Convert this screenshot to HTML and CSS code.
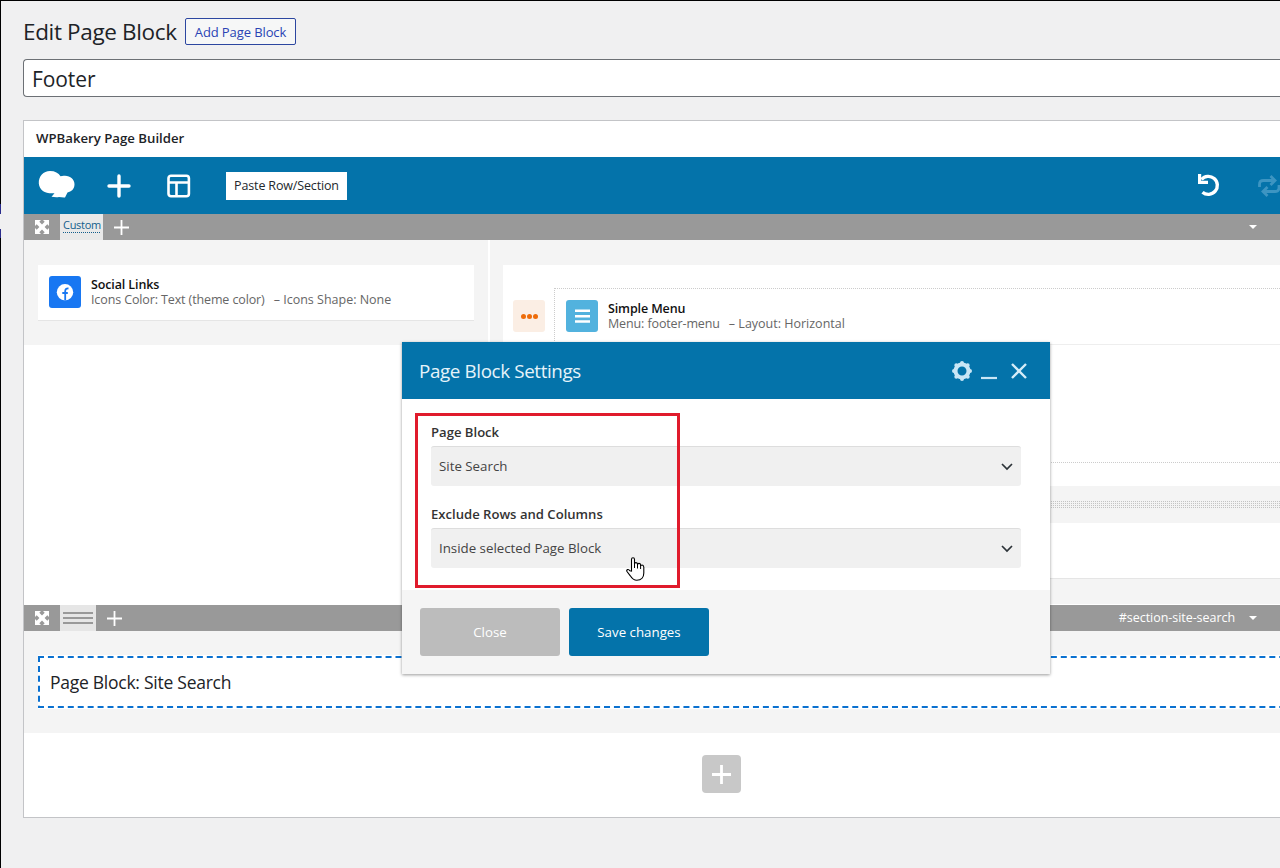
FILE: index.html
```html
<!DOCTYPE html>
<html lang="en">
<head>
    <meta charset="UTF-8">
    <meta name="viewport" content="width=device-width, initial-scale=1.0">
    <title>Edit Page Block</title>
    <link rel="stylesheet" href="styles.css">
</head>
<body>
    <div class="admin-edge"></div>
    <div class="page">
        <div class="page-head">
            <h1>Edit Page Block</h1>
            <a class="page-action">Add Page Block</a>
        </div>
        <div class="title-input">Footer</div>

        <!-- Builder -->
        <div class="postbox">
            <h2 class="postbox-title">WPBakery Page Builder</h2>

            <div class="toolbar">
                <svg class="logo" width="38" height="28" viewBox="0 0 38 28">
                    <path fill="#fff" d="M12 0C17 0 20.500 2 22.500 5.300c1.500-.6 3-.8 4.500-.5 5.500.2 9.500 3.700 9.500 8.500 0 4.800-3.200 7.600-7 8.200l-2.500 5c-2 .2-4-.2-6-.5-2 .4-5 .2-7.500-.3l3-3.500C8 23 1.500 20 .8 12.500 .5 5 5.500 0 12 0z"/>
                </svg>
                <svg class="tool-add" width="24" height="24" viewBox="0 0 24 24">
                    <path d="M12 2v20M2 12h20" stroke="#fff" stroke-width="3.400" stroke-linecap="round"/>
                </svg>
                <svg class="tool-template" width="24" height="24" viewBox="0 0 24 24" fill="none" stroke="#fff" stroke-width="2.600">
                    <rect x="1.500" y="1.800" width="20.400" height="20.400" rx="2.500"/>
                    <path d="M2 8.500h20M9.500 8.500V22"/>
                </svg>
                <button class="paste-btn">Paste Row/Section</button>
                <svg class="tool-undo" width="24" height="24" viewBox="0 0 24 24">
                    <path d="M4.500 5.500A9 9 0 1 1 5.500 18.200" fill="none" stroke="#fff" stroke-width="3.400"/>
                    <path d="M1 0h3.200v6.800h6.800V10H1z" fill="#fff"/>
                </svg>
                <svg class="tool-redo" width="24" height="22" viewBox="0 0 24 22" fill="none" stroke="#3d95c2" stroke-width="2.800">
                    <path d="M2.500 12V9.500Q2.500 5.500 6.500 5.500h11M22 10v2.500q0 4-4 4H7"/>
                    <path d="M13.500 1l4.500 4.500-4.500 4.500M10.500 12L6 16.500l4.500 4.500"/>
                </svg>
            </div>

            <div class="row-controls">
                <span class="ctl-move">
                    <svg width="14" height="14" viewBox="0 0 14 14" fill="#fff">
                        <path d="M0 0h6L4.300 1.700 7 4.400l2.700-2.700L8 0h6v6l-1.700-1.700L9.600 7l2.700 2.700L14 8v6H8l1.700-1.700L7 9.600l-2.700 2.700L6 14H0V8l1.700 1.700L4.400 7 1.700 4.300 0 6z"/>
                    </svg>
                </span>
                <span class="ctl-custom"><span>Custom</span></span>
                <svg class="ctl-add" width="15" height="15" viewBox="0 0 15 15"><path d="M7.500 0v15M0 7.500h15" stroke="#fff" stroke-width="1.800"/></svg>
                <span class="caret"></span>
            </div>

            <div class="row">
                <div class="column-left">
                    <div class="element">
                        <svg class="element-icon" width="32" height="32" viewBox="0 0 32 32">
                            <rect width="32" height="32" rx="3" fill="#1877f2"/>
                            <circle cx="16" cy="16.200" r="8.200" fill="#fff"/>
                            <path d="M16.200 24.500v-9.300q0-3 3.300-2.700M13.300 17h5.500" stroke="#1877f2" stroke-width="1.800" fill="none"/>
                        </svg>
                        <div class="element-text">
                            <strong>Social Links</strong>
                            <p><span>Icons Color: Text (theme color)</span><span class="param">– Icons Shape: None</span></p>
                        </div>
                    </div>
                </div>
                <div class="column-right">
                    <div class="wrapper">
                        <div class="wrapper-handle"><i></i><i></i><i></i></div>
                        <div class="inner">
                            <div class="element element-menu">
                                <svg class="element-icon" width="32" height="32" viewBox="0 0 32 32">
                                    <rect width="32" height="32" rx="3" fill="#52b2de"/>
                                    <path d="M9 10.800h15M9 16.300h15M9 21.500h15" stroke="#fff" stroke-width="2.600"/>
                                </svg>
                                <div class="element-text">
                                    <strong>Simple Menu</strong>
                                    <p><span>Menu: footer-menu</span><span class="param">– Layout: Horizontal</span></p>
                                </div>
                            </div>
                        </div>
                    </div>
                    <div class="separator"></div>
                    <div class="blank-element"></div>
                </div>
            </div>

            <div class="row-controls">
                <span class="ctl-move">
                    <svg width="14" height="14" viewBox="0 0 14 14" fill="#fff">
                        <path d="M0 0h6L4.300 1.700 7 4.400l2.700-2.700L8 0h6v6l-1.700-1.700L9.600 7l2.700 2.700L14 8v6H8l1.700-1.700L7 9.600l-2.700 2.700L6 14H0V8l1.700 1.700L4.400 7 1.700 4.300 0 6z"/>
                    </svg>
                </span>
                <span class="ctl-layout"><i></i><i></i><i></i></span>
                <svg class="ctl-add" width="15" height="15" viewBox="0 0 15 15"><path d="M7.500 0v15M0 7.500h15" stroke="#fff" stroke-width="1.800"/></svg>
                <span class="row-id">#section-site-search</span>
                <span class="caret"></span>
            </div>

            <div class="row-second">
                <div class="page-block">
                    <svg class="dashes" width="100%" height="54">
                        <path d="M1 1v52M0 2h1243M0 52h1243" fill="none" stroke="#0a71d0" stroke-width="2" stroke-dasharray="6 3.930"/>
                    </svg>
                    <span>Page Block: Site Search</span>
                </div>
            </div>

            <div class="add-row">
                <button class="add-btn">
                    <svg width="19" height="19" viewBox="0 0 19 19"><path d="M9.500 0v19M0 9.500h19" stroke="#fff" stroke-width="2.800"/></svg>
                </button>
            </div>
        </div>
    </div>

    <!-- Settings window -->
    <div class="modal">
        <div class="modal-head">
            <h3>Page Block Settings</h3>
            <svg class="gear" width="20" height="20" viewBox="0 0 20 20">
                <circle cx="10" cy="10" r="6.500" fill="none" stroke="#c9e6f6" stroke-width="4"/>
                <path d="M10 2v0M10 18v0M2 10v0M18 10v0M4.300 4.300v0M15.700 4.300v0M4.300 15.700v0M15.700 15.700v0" stroke="#c9e6f6" stroke-width="4" stroke-linecap="round"/>
            </svg>
            <svg class="minimize" width="16" height="20" viewBox="0 0 16 20"><path d="M0 17h16" stroke="#c9e6f6" stroke-width="2.200"/></svg>
            <svg class="close" width="16" height="16" viewBox="0 0 16 16"><path d="M1 1l14 14M15 1L1 15" stroke="#d5ecf8" stroke-width="2.400"/></svg>
        </div>
        <div class="modal-body">
            <label>Page Block</label>
            <div class="select">
                <span>Site Search</span>
                <svg width="12" height="8" viewBox="0 0 12 8"><path d="M1 1l5 5 5-5" fill="none" stroke="#2c3338" stroke-width="1.700"/></svg>
            </div>
            <label>Exclude Rows and Columns</label>
            <div class="select">
                <span>Inside selected Page Block</span>
                <svg width="12" height="8" viewBox="0 0 12 8"><path d="M1 1l5 5 5-5" fill="none" stroke="#2c3338" stroke-width="1.700"/></svg>
            </div>
            <div class="highlight"></div>
            <svg class="pointer" width="19" height="24" viewBox="0 0 19 24">
                <path d="M5.500 14V2.500q0-1.700 1.500-1.700t1.500 1.700V7q0-1.400 1.400-1.400t1.600 1.400v1q0-1.600 1.500-1.600T14.600 8v1q0-1 1.400-1T17.800 10v6c0 4-2.300 7.300-7 7.300-3.500 0-5-2-6.500-4.500L1 14.500q-.8-1.500.5-1.900t2.500 1.200z" fill="#fff" stroke="#000" stroke-width="1.100"/>
                <path d="M8.500 6.500V11M11.500 7.500V11.500M14.600 8.500v3.500" stroke="#000" stroke-width="1"/>
            </svg>
        </div>
        <div class="modal-foot">
            <button class="btn btn-close">Close</button>
            <button class="btn btn-save">Save changes</button>
        </div>
    </div>
</body>
</html>
```
FILE: styles.css
```css
* {
    box-sizing: border-box;
}
body {
    position: relative;
    margin: 0;
    width: 1280px;
    height: 868px;
    overflow: hidden;
    background: #f0f0f1;
    border-top: 1px solid #000;
    color: #1d2327;
    font-family: "Open Sans", "Noto Sans", sans-serif;
    font-size: 13px;
    display: flex;
}
h1, h2, h3, p {
    margin: 0;
    font-weight: 400;
}
button {
    flex: none;
    border: 0;
    padding: 0;
    font-family: inherit;
}
svg {
    display: block;
    flex: none;
}
span, a, strong {
    white-space: nowrap;
}
.admin-edge {
    flex: none;
    width: 1px;
    background: linear-gradient(#000 203px, #2a2c8c 203px, #2a2c8c 213px, #f0f0f1 213px, #f0f0f1 228px, #2a2c8c 228px, #2a2c8c 237px, #000 237px);
}
.page {
    flex: 1;
    min-width: 0;
    padding: 17px 0 0 22px;
}
.page-head {
    display: flex;
    height: 27px;
    align-items: center;
}
h1 {
    width: 162px;
    font-size: 22.5px;
    letter-spacing: -0.35px;
    line-height: 27px;
    white-space: nowrap;
}
.page-action {
    width: 111px;
    height: 27px;
    border: 1px solid #2c46a0;
    border-radius: 2px;
    background: #f6f7f7;
    color: #2a43b4;
    font-size: 13px;
    letter-spacing: -0.1px;
    line-height: 27px;
    text-align: center;
}
.title-input {
    height: 38px;
    margin-top: 14px;
    padding-left: 8px;
    border: 1px solid #6c7075;
    border-right: 0;
    border-radius: 4px 0 0 4px;
    background: #fff;
    font-size: 21px;
    letter-spacing: -0.1px;
    line-height: 39px;
}
.postbox {
    height: 698px;
    margin-top: 23px;
    border: 1px solid #c3c4c7;
    border-right: 0;
    background: #fff;
}
.postbox-title {
    height: 36px;
    padding-left: 12px;
    font-size: 13.2px;
    font-weight: 600;
    line-height: 35px;
}
.toolbar {
    height: 57px;
    display: flex;
    align-items: center;
    overflow: hidden;
    padding-left: 14px;
    background: #0473aa;
}
.logo {
    margin-top: -2px;
}
.tool-add {
    margin-left: 31px;
}
.tool-template {
    margin-left: 36px;
}
.paste-btn {
    width: 121px;
    height: 28px;
    margin-left: 35px;
    background: #fff;
    color: #23282d;
    font-size: 12.5px;
    letter-spacing: -0.15px;
    line-height: 28px;
}
.tool-undo {
    margin-left: 850px;
}
.tool-redo {
    margin-left: 36px;
}
.row-controls {
    height: 26px;
    display: flex;
    align-items: center;
    padding-right: 23px;
    background: #999;
    color: #fff;
}
.ctl-move {
    width: 36px;
    padding-left: 11px;
}
.ctl-custom {
    width: 43px;
    height: 26px;
    padding: 4px 3px 0;
    background: #e9e9e9;
    color: #135e8c;
    font-size: 11px;
    letter-spacing: -0.3px;
    line-height: 14px;
}
.ctl-custom span {
    display: block;
    border-bottom: 1px dotted #135e8c;
}
.ctl-layout {
    width: 36px;
    height: 26px;
    padding: 0 3px;
    display: flex;
    flex-direction: column;
    justify-content: center;
    gap: 3px;
    background: #e6e6e6;
}
.ctl-layout i {
    height: 2px;
    background: #999;
}
.ctl-add {
    margin-left: 11px;
}
.caret {
    margin-left: auto;
    border: 4px solid transparent;
    border-top-color: #fff;
    border-bottom: 0;
}
.row {
    display: flex;
    align-items: flex-start;
    gap: 2px;
    height: 365px;
}
.column-left {
    width: 464px;
    height: 105px;
    padding: 25px 14px;
    background: #f4f4f4;
}
.element {
    display: flex;
    height: 56px;
    padding: 11px;
    border-bottom: 1px solid #e5e5e5;
    background: #fff;
    font-size: 12.5px;
    letter-spacing: -0.12px;
    line-height: 15px;
}
.element-text {
    padding: 1px 0 0 10px;
    color: #666;
}
.element-text strong {
    display: block;
    color: #111;
    font-weight: 600;
}
.element-text p {
    display: flex;
    gap: 9px;
}
.param {
    letter-spacing: 0;
}
.column-right {
    flex: 1;
    height: 364px;
    padding: 25px 0 0 13px;
    background: #f4f4f4;
}
.wrapper {
    display: flex;
    height: 221px;
    padding: 23px 0 0 10px;
    background: #fff;
}
.wrapper-handle {
    width: 32px;
    height: 32px;
    margin: 12px 9px 0 0;
    display: flex;
    align-items: center;
    justify-content: center;
    gap: 1px;
    border-radius: 3px;
    background: #fbeee4;
}
.wrapper-handle i {
    width: 5px;
    height: 5px;
    border-radius: 50%;
    background: #ee6c0a;
}
.inner {
    flex: 1;
    height: 175px;
    border: 1px dotted #ccc;
    border-right: 0;
}
.element-menu {
    border-color: #eee;
}
.separator {
    height: 7px;
    margin: 15px 0;
    background: repeating-linear-gradient(transparent 0 1px, #f4f4f4 1px 2px), repeating-linear-gradient(90deg, #c4c4c4 0 1px, #f4f4f4 1px 2px);
}
.blank-element {
    height: 56px;
    border-bottom: 1px solid #e5e5e5;
    background: #fff;
}
.row-id {
    margin-left: auto;
    margin-top: -2px;
    font-size: 12.5px;
    letter-spacing: -0.05px;
}
.row-id + .caret {
    margin-left: 14px;
}
.row-second {
    height: 102px;
    padding: 24px 0 24px 14px;
    background: #f4f4f4;
}
.page-block {
    position: relative;
    height: 54px;
    padding-left: 12px;
    background: #fff;
    font-size: 17.5px;
    letter-spacing: -0.26px;
    line-height: 54px;
}
.dashes {
    position: absolute;
    left: 0;
    top: 0;
}
.add-row {
    padding: 22px 0 0 678px;
}
.add-btn {
    display: flex;
    align-items: center;
    justify-content: center;
    width: 39px;
    height: 38px;
    border-radius: 4px;
    background: #c8c8c8;
}
.modal {
    position: absolute;
    left: 402px;
    top: 341px;
    width: 648px;
    height: 332px;
    background: #fff;
    box-shadow: 0 1px 3px rgba(0,0,0,0.4);
}
.modal-head {
    height: 57px;
    display: flex;
    align-items: center;
    padding-left: 17px;
    background: #0473aa;
    color: #e6f3fa;
}
h3 {
    width: 533px;
    font-size: 18.8px;
    letter-spacing: -0.37px;
}
.minimize {
    margin-left: 9px;
}
.close {
    margin-left: 14px;
}
.modal-body {
    position: relative;
    height: 191px;
    padding: 23px 29px 0;
}
.modal-body label {
    display: block;
    height: 24px;
    color: #333;
    font-size: 13.1px;
    font-weight: 600;
    line-height: 20px;
    white-space: nowrap;
}
.select {
    display: flex;
    align-items: center;
    justify-content: space-between;
    height: 40px;
    margin-bottom: 18px;
    padding: 0 8px 0 8px;
    border-top: 1px solid #ddd;
    border-radius: 3px;
    background: #f0f0f0;
    color: #444;
    font-size: 13.3px;
}
.select span {
    padding-bottom: 2px;
}
.highlight {
    position: absolute;
    left: 13px;
    top: 14px;
    width: 265px;
    height: 175px;
    border: 3px solid #e01b2c;
}
.pointer {
    position: absolute;
    left: 224px;
    top: 158px;
}
.modal-foot {
    display: flex;
    gap: 9px;
    height: 84px;
    padding: 18px;
    background: #f5f5f5;
}
.btn {
    width: 140px;
    height: 48px;
    border-radius: 3px;
    color: #fff;
    font-size: 13.3px;
}
.btn-close {
    background: #bcbcbc;
}
.btn-save {
    background: #0473aa;
}
```
